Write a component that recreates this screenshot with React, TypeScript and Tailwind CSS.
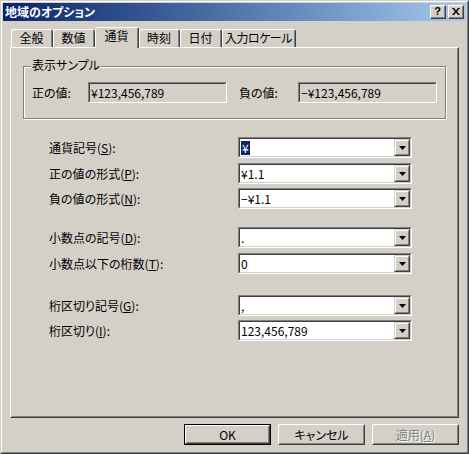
import React from 'react';

const Sunken: React.FC<{ className?: string; inner?: string; children?: React.ReactNode }> = ({ className = '', inner = '', children }) => (
    <div className={`border border-t-[#808080] border-l-[#808080] border-b-white border-r-white ${className}`}>
        <div className={`h-full border border-t-[#404040] border-l-[#404040] border-b-[#d4d0c8] border-r-[#d4d0c8] ${inner}`}>{children}</div>
    </div>
);

const DropButton: React.FC = () => (
    <div className="w-[16px] h-full border border-t-[#d4d0c8] border-l-[#d4d0c8] border-b-[#404040] border-r-[#404040]">
        <div className="h-full border border-t-white border-l-white border-b-[#808080] border-r-[#808080] bg-[#d4d0c8] flex items-center justify-center">
            <svg width="7" height="4" viewBox="0 0 7 4" className="block">
                <path d="M0 0h7L3.5 4z" fill="#000" />
            </svg>
        </div>
    </div>
);

const Combo: React.FC<{ children?: React.ReactNode }> = ({ children }) => (
    <Sunken className="w-[174px] h-[21px]" inner="bg-white flex">
        <div className="flex-1 flex items-center pl-[1px] leading-none">{children}</div>
        <DropButton />
    </Sunken>
);

const Row: React.FC<{ label: React.ReactNode; className?: string; children?: React.ReactNode }> = ({ label, className = '', children }) => (
    <div className={`flex items-center h-[21px] ${className}`}>
        <div className="w-[189px] leading-none">{label}</div>
        <Combo>{children}</Combo>
    </div>
);

const Button: React.FC<{ children?: React.ReactNode; isDefault?: boolean; disabled?: boolean }> = ({ children, isDefault, disabled }) => {
    const face = (
        <div className="h-full border border-t-white border-l-white border-b-[#404040] border-r-[#404040]">
            <div className={`h-full border border-t-[#d4d0c8] border-l-[#d4d0c8] border-b-[#808080] border-r-[#808080] flex items-center justify-center ${disabled ? 'text-[#808080] [text-shadow:1px_1px_0_#fff]' : ''}`}>
                {children}
            </div>
        </div>
    );
    return isDefault ? (
        <div className="w-[87px] h-[21px] border border-black">{face}</div>
    ) : (
        <div className="w-[87px] h-[21px]">{face}</div>
    );
};

const tabs = [
    { label: '全般', w: 'w-[42px]' },
    { label: '数値', w: 'w-[42px]' },
    { label: '通貨', w: 'w-[44px]', active: true },
    { label: '時刻', w: 'w-[41px]' },
    { label: '日付', w: 'w-[42px]' },
    { label: '入力ロケール', w: 'w-[74px] tracking-[-0.5px]' },
];

export default function App() {
    return (
        <div className="w-[469px] h-[454px] bg-[#d4d0c8] text-[12px] text-black font-['Noto_Sans_CJK_JP','Liberation_Sans',sans-serif] [font-feature-settings:'palt'] border border-t-[#d4d0c8] border-l-[#d4d0c8] border-b-[#404040] border-r-[#404040]">
            <div className="h-full border border-t-white border-l-white border-b-[#808080] border-r-[#808080] p-[1px] flex flex-col">
                {/* Title bar */}
                <div className="h-[18px] flex items-center justify-between pl-[2px] pr-[2px] bg-gradient-to-r from-[#0a246a] to-[#a6caf0]">
                    <span className="text-white font-bold leading-none">地域のオプション</span>
                    <div className="flex gap-[2px]">
                        <div className="w-[16px] h-[14px] border border-t-white border-l-white border-b-[#404040] border-r-[#404040] bg-[#d4d0c8]">
                            <div className="h-full border-b border-r border-[#808080] flex items-center justify-center font-['Liberation_Sans',sans-serif] font-bold text-[11px] leading-none">?</div>
                        </div>
                        <div className="w-[16px] h-[14px] border border-t-white border-l-white border-b-[#404040] border-r-[#404040] bg-[#d4d0c8]">
                            <div className="h-full border-b border-r border-[#808080] flex items-center justify-center">
                                <svg width="8" height="7" viewBox="0 0 8 7" className="block">
                                    <path d="M0 0h2l2 2.5L6 0h2L5 3.5 8 7H6L4 4.5 2 7H0l3-3.5z" fill="#000" />
                                </svg>
                            </div>
                        </div>
                    </div>
                </div>

                {/* Body */}
                <div className="flex flex-col px-[7px] pt-[6px]">
                    <div className="h-[20px] flex items-end pl-[1px]">
                        {tabs.map((t) =>
                            t.active ? (
                                <div key={t.label} className={`${t.w} h-[21px] -mb-px relative z-10 bg-[#d4d0c8] rounded-t-[3px] border-t border-l border-r border-t-white border-l-white border-r-[#404040]`}>
                                    <div className="h-full border-r border-[#808080] flex items-start justify-center pt-[2px] leading-none">{t.label}</div>
                                </div>
                            ) : (
                                <div key={t.label} className={`${t.w} h-[18px] rounded-t-[3px] border-t border-l border-r border-t-white border-l-white border-r-[#404040]`}>
                                    <div className="h-full border-r border-[#808080] flex items-start justify-center pt-[2px] leading-none whitespace-nowrap">{t.label}</div>
                                </div>
                            )
                        )}
                    </div>

                    <div className="h-[371px] border border-t-white border-l-white border-b-[#404040] border-r-[#404040]">
                        <div className="h-full border border-t-[#d4d0c8] border-l-[#d4d0c8] border-b-[#808080] border-r-[#808080] flex flex-col">
                            {/* Sample group */}
                            <div className="relative mx-[11px] mt-[17px] h-[53px] border border-[#808080] shadow-[1px_1px_0_#fff,inset_1px_1px_0_#fff] flex items-start pt-[15px] pl-[8px]">
                                <span className="absolute -top-[8px] left-[7px] px-[1px] bg-[#d4d0c8] leading-none">表示サンプル</span>
                                <div className="w-[56px] h-[21px] flex items-center leading-none">正の値:</div>
                                <Sunken className="w-[139px] h-[21px]" inner="bg-[#d4d0c8] flex items-center pl-[1px] leading-none">¥123,456,789</Sunken>
                                <div className="w-[59px] ml-[12px] h-[21px] flex items-center leading-none">負の値:</div>
                                <Sunken className="w-[139px] h-[21px]" inner="bg-[#d4d0c8] flex items-center pl-[1px] leading-none">−¥123,456,789</Sunken>
                            </div>

                            <div className="flex flex-col pl-[37px]">
                                <Row className="mt-[18px]" label={<>通貨記号(<span className="underline">S</span>):</>}>
                                    <span className="bg-[#0a246a] text-white px-[1px] py-[1px]">¥</span>
                                </Row>
                                <Row className="mt-[5px]" label={<>正の値の形式(<span className="underline">P</span>):</>}>¥1.1</Row>
                                <Row className="mt-[4px]" label={<>負の値の形式(<span className="underline">N</span>):</>}>−¥1.1</Row>
                                <Row className="mt-[18px]" label={<>小数点の記号(<span className="underline">D</span>):</>}>.</Row>
                                <Row className="mt-[5px]" label={<>小数点以下の桁数(<span className="underline">T</span>):</>}>0</Row>
                                <Row className="mt-[21px]" label={<>桁区切り記号(<span className="underline">G</span>):</>}>,</Row>
                                <Row className="mt-[4px]" label={<>桁区切り(<span className="underline">I</span>):</>}>123,456,789</Row>
                            </div>
                        </div>
                    </div>

                    <div className="flex justify-end gap-[7px] mt-[6px]">
                        <Button isDefault>OK</Button>
                        <Button>キャンセル</Button>
                        <Button disabled>
                            適用(<span className="underline">A</span>)
                        </Button>
                    </div>
                </div>
            </div>
        </div>
    );
}
